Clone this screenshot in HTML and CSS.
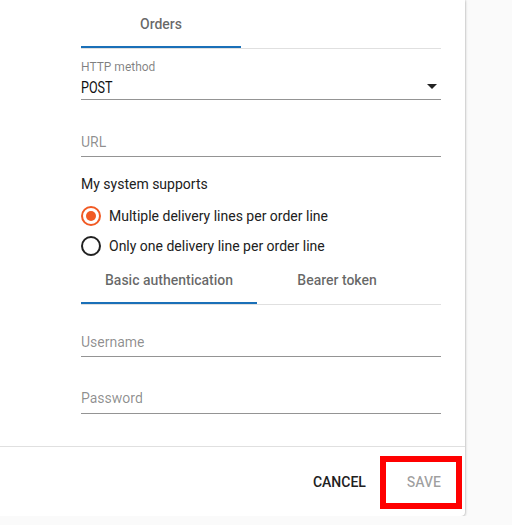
FILE: index.html
```html
<!DOCTYPE html>
<html>
<head>
<meta charset="utf-8">
<link rel="stylesheet" href="styles.css">
</head>
<body>
<div class="dialog">
  <div class="content">
    <div class="tabs">
      <div class="tab active tab-orders">Orders</div>
    </div>

    <div class="select-field">
      <div class="float-label">HTTP method</div>
      <div class="select-row">
        <span class="select-value">POST</span>
        <svg class="arrow" width="10" height="5" viewBox="0 0 10 5"><path d="M0 0 L10 0 L5 5 Z" fill="#222"/></svg>
      </div>
    </div>

    <div class="input-field url-field"><span class="placeholder">URL</span></div>

    <div class="group-label">My system supports</div>
    <div class="radio-group">
      <label class="radio-row">
        <span class="radio checked"><span class="dot"></span></span>
        <span class="radio-text">Multiple delivery lines per order line</span>
      </label>
      <label class="radio-row">
        <span class="radio"></span>
        <span class="radio-text">Only one delivery line per order line</span>
      </label>
    </div>

    <div class="tabs">
      <div class="tab active">Basic authentication</div>
      <div class="tab">Bearer token</div>
    </div>

    <div class="input-field user-field"><span class="placeholder">Username</span></div>
    <div class="input-field pass-field"><span class="placeholder">Password</span></div>
  </div>

  <div class="actions">
    <button class="btn cancel">CANCEL</button>
    <button class="btn save">SAVE</button>
  </div>
</div>
</body>
</html>
```

FILE: styles.css
```css
html, body {
  margin: 0;
  padding: 0;
  background: #fafafa;
  font-family: Roboto, "Liberation Sans", sans-serif;
  color: #212121;
}

.dialog {
  width: 465px;
  height: 516px;
  background: #fff;
  border-radius: 0 0 4px 0;
  box-shadow: 0 1px 3px rgba(0,0,0,0.22), 1px 0 2px rgba(0,0,0,0.10);
  display: flex;
  flex-direction: column;
}

.content {
  padding-left: 81px;
  width: 360px;
  height: 446px;
  box-sizing: content-box;
}

.tabs {
  display: flex;
  border-bottom: 1px solid #e0e0e0;
}

.tab {
  height: 48px;
  line-height: 48px;
  min-width: 160px;
  padding: 0 24px;
  box-sizing: border-box;
  text-align: center;
  font-size: 14px;
  font-weight: 500;
  color: rgba(0,0,0,0.6);
  white-space: nowrap;
}

.tab.active {
  box-shadow: inset 0 -2px 0 #1a70b8;
}

.select-field {
  margin-top: 10px;
}

.float-label {
  font-size: 12px;
  line-height: 16px;
  color: rgba(0,0,0,0.5);
}

.select-row {
  height: 24px;
  display: flex;
  align-items: center;
  justify-content: space-between;
  padding-right: 4px;
  border-bottom: 1px solid #949494;
}

.select-value {
  display: inline-block;
  font-size: 17px;
  line-height: 24px;
  color: #111;
  transform: scaleX(0.74);
  transform-origin: left center;
}

.arrow {
  display: block;
  margin-top: -2px;
}

.input-field {
  height: 24px;
  line-height: 24px;
  padding-bottom: 2px;
  border-bottom: 1px solid #949494;
  font-size: 14px;
}

.placeholder {
  color: rgba(0,0,0,0.45);
}

.url-field { margin-top: 30px; }
.user-field { margin-top: 25px; }
.pass-field { margin-top: 29px; padding-bottom: 3px; }

.group-label {
  margin-top: 17px;
  font-size: 14px;
  line-height: 20px;
  color: #212121;
}

.radio-group {
  margin-top: 12px;
  display: flex;
  flex-direction: column;
  gap: 10px;
}

.radio-row {
  display: flex;
  align-items: center;
  height: 20px;
  font-size: 14px;
  line-height: 20px;
}

.radio {
  width: 20px;
  height: 20px;
  box-sizing: border-box;
  border: 2px solid #212121;
  border-radius: 50%;
  display: flex;
  align-items: center;
  justify-content: center;
  margin-right: 8px;
  flex: none;
}

.radio.checked {
  border-color: #f15a24;
}

.dot {
  width: 10px;
  height: 10px;
  border-radius: 50%;
  background: #f15a24;
}

.radio-text {
  color: #212121;
}

.actions {
  border-top: 1px solid #e0e0e0;
  flex: 1;
  display: flex;
  justify-content: flex-end;
  align-items: flex-start;
  padding: 9px 3px 0 0;
}

.btn {
  font-family: Roboto, "Liberation Sans", sans-serif;
  font-size: 14px;
  font-weight: 500;
  background: transparent;
  border: none;
  margin: 0;
  cursor: pointer;
}

.cancel {
  height: 53px;
  line-height: 53px;
  padding: 0 14px 0 16px;
  color: #212121;
}

.save {
  height: 53px;
  line-height: 41px;
  border: 6px solid #ff0000;
  padding: 0 15px 0 21px;
  color: rgba(0,0,0,0.38);
  box-sizing: border-box;
}
```
